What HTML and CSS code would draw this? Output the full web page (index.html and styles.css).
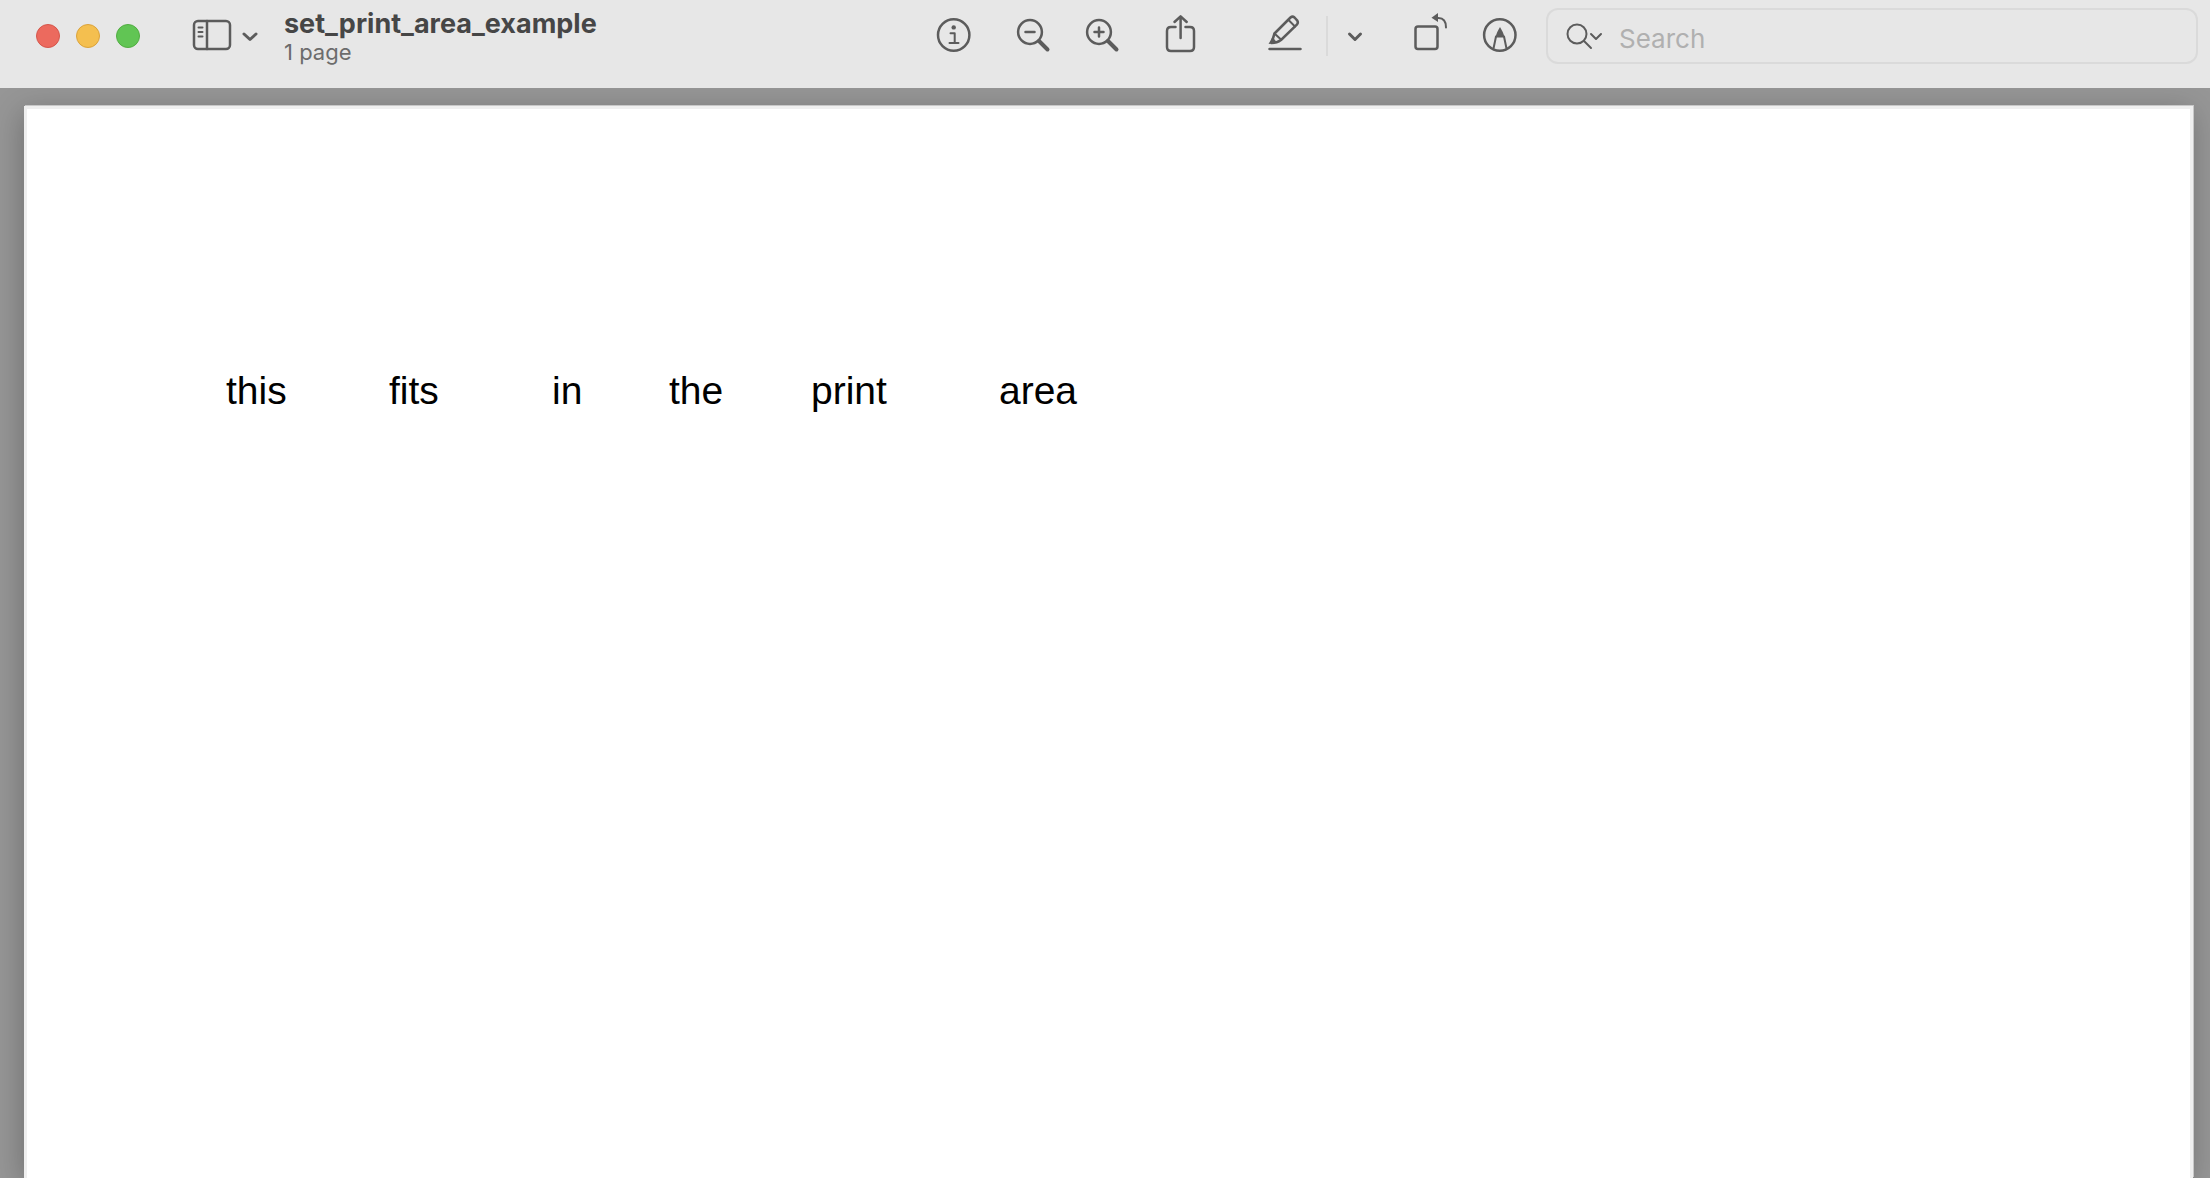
FILE: index.html
```html
<!DOCTYPE html>
<html lang="en">
<head>
<meta charset="utf-8">
<meta name="viewport" content="width=device-width, initial-scale=1">
<title>set_print_area_example</title>
<link rel="stylesheet" href="styles.css">
</head>
<body>
<header class="toolbar">
  <div class="lights">
    <button class="light light-close" aria-label="Close"></button>
    <button class="light light-minimize" aria-label="Minimize"></button>
    <button class="light light-zoom" aria-label="Full screen"></button>
  </div>
  <button class="tool sidebar-tool" aria-label="Sidebar view">
    <svg width="66" height="48" viewBox="0 0 66 48">
      <rect x="2" y="11" width="36" height="28" rx="4"/>
      <path d="M15 11v28"/>
      <path class="thin" d="M6.500 17.500h4M6.500 22h4M6.500 26.500h4"/>
      <path class="bold" d="M52 24l6 5.500 6-5.500"/>
    </svg>
  </button>
  <div class="heading">
    <h1 class="title">set_print_area_example</h1>
    <p class="subtitle">1 page</p>
  </div>
  <div class="tools">
    <button class="tool" aria-label="Info">
      <svg width="36" height="48" viewBox="0 0 36 48">
        <circle cx="17.700" cy="25" r="15.700"/>
        <circle class="solid" cx="17.700" cy="17.400" r="2.200"/>
        <path class="thin" d="M14.500 23.300h4.200v9.700M13.500 33h9"/>
      </svg>
    </button>
    <button class="tool gap-wide" aria-label="Zoom out">
      <svg width="36" height="48" viewBox="0 0 36 48">
        <circle cx="15" cy="22" r="11.900"/>
        <path d="M10.500 22h9"/>
        <path class="handle" d="M24 31l8.500 8.500"/>
      </svg>
    </button>
    <button class="tool gap" aria-label="Zoom in">
      <svg width="36" height="48" viewBox="0 0 36 48">
        <circle cx="15" cy="22" r="11.900"/>
        <path d="M10.500 22h9M15 17.500v9"/>
        <path class="handle" d="M24 31l8.500 8.500"/>
      </svg>
    </button>
    <button class="tool gap-wide" aria-label="Share">
      <svg width="36" height="48" viewBox="0 0 36 48">
        <path d="M12.500 17H8q-4 0-4 4v16q0 4 4 4h19q4 0 4-4V21q0-4-4-4h-4.500"/>
        <path d="M17.600 28V6.500M11.500 12l6.100-5.700 6.100 5.700"/>
      </svg>
    </button>
    <button class="tool gap-group" aria-label="Highlight">
      <svg width="36" height="48" viewBox="0 0 36 48">
        <path d="M2.500 39h31"/>
        <path d="M4.500 33l3-9.500 16-16q2-1.800 4 0l2.600 2.800q1.500 2 0 4L14 30q-4 3-9.500 3z"/>
        <path class="thin" d="M21.500 10l6.500 6.500M7.500 23.500l6.500 6"/>
        <path class="solid" d="M1.500 34l4-7 4.500 5.500z"/>
      </svg>
    </button>
    <span class="divider"></span>
    <button class="tool" aria-label="Highlight options">
      <svg width="16" height="48" viewBox="0 0 16 48">
        <path class="bold" d="M2.500 24l5.500 5.500 5.500-5.500"/>
      </svg>
    </button>
    <button class="tool gap-rotate" aria-label="Rotate">
      <svg width="36" height="48" viewBox="0 0 36 48">
        <rect x="2.500" y="16.500" width="22" height="22.500" rx="2.500"/>
        <path class="thin" d="M24 8h1.500q7.500 0 7.500 9.500"/>
        <path class="solid" d="M18.500 7.800l6.500-4.800v9z"/>
      </svg>
    </button>
    <button class="tool gap" aria-label="Markup">
      <svg width="36" height="48" viewBox="0 0 36 48">
        <circle cx="17.800" cy="25" r="15.700"/>
        <path class="thin" d="M11.500 38.500l2.500-12M24.500 38.500l-2.500-12"/>
        <path class="solid" d="M18 17q-3 4.500-4.800 10.500h9.600q-1.800-6-4.800-10.500z"/>
      </svg>
    </button>
  </div>
  <label class="search">
    <svg width="38" height="30" viewBox="0 0 38 30" aria-hidden="true">
      <circle cx="12" cy="13" r="9.500"/>
      <path d="M19 20l7 7"/>
      <path d="M26 13l5 5 5-5"/>
    </svg>
    <input class="search-input" type="search" placeholder="Search" aria-label="Search">
  </label>
</header>
<main class="viewer">
  <article class="sheet">
    <table class="cells">
      <colgroup><col class="c1"><col class="c2"><col class="c3"><col class="c4"><col class="c5"><col class="c6"></colgroup>
      <tbody>
        <tr><td>this</td><td>fits</td><td>in</td><td>the</td><td>print</td><td>area</td></tr>
      </tbody>
    </table>
  </article>
</main>
</body>
</html>
```
FILE: styles.css
```css
* {
  box-sizing: border-box;
}

body {
  display: flex;
  flex-direction: column;
  height: 100vh;
  margin: 0;
  overflow: hidden;
  background: #969696;
  font-family: Inter, "Liberation Sans", sans-serif;
}

button {
  flex: none;
  padding: 0;
  border: 0;
  background: none;
}

.toolbar {
  position: relative;
  z-index: 1;
  display: flex;
  flex: none;
  align-items: flex-start;
  height: 88px;
  padding: 8px 12px 0 36px;
  background: #e7e7e7;
}

.lights {
  display: flex;
  gap: 16px;
  padding-top: 16px;
}

.light {
  width: 24px;
  height: 24px;
  border: 1px solid;
  border-radius: 50%;
}

.light-close {
  border-color: #d5574c;
  background: #ec6a5e;
}

.light-minimize {
  border-color: #dba33b;
  background: #f4bf4f;
}

.light-zoom {
  border-color: #52ad42;
  background: #61c554;
}

.tool {
  display: block;
  padding-top: 2px;
}

.tool svg,
.search svg {
  display: block;
  flex: none;
  fill: none;
  stroke: #5c5c5c;
  stroke-width: 2.500;
  stroke-linecap: round;
  stroke-linejoin: round;
}

.tool .thin {
  stroke-width: 2;
}

.tool .bold {
  stroke-width: 3;
}

.tool .handle {
  stroke-width: 4;
}

.tool .solid {
  fill: #5c5c5c;
  stroke: none;
}

.sidebar-tool {
  margin-left: 52px;
}

.heading {
  flex: 1 1 0;
  min-width: 0;
  margin-left: 26px;
}

.title {
  margin: 0;
  color: #464646;
  font-size: 27px;
  font-weight: 700;
  line-height: 31px;
}

.subtitle {
  margin: 0;
  color: #6c6c6c;
  font-size: 22px;
  line-height: 26px;
}

.tools {
  display: flex;
  flex: none;
  align-items: flex-start;
  margin-right: 28px;
}

.gap {
  margin-left: 33px;
}

.gap-wide {
  margin-left: 43px;
}

.gap-group {
  margin-left: 68px;
}

.gap-rotate {
  margin-left: 50px;
}

.divider {
  width: 2px;
  height: 40px;
  margin: 8px 19px 0 23px;
  background: #dadada;
}

.search {
  display: flex;
  flex: 1 1 0;
  align-items: center;
  min-width: 0;
  height: 56px;
  border-radius: 12px;
  box-shadow: inset 0 0 0 2px #dadada;
}

.search svg {
  margin-left: 19px;
  stroke-width: 2;
}

.search-input {
  flex: 1;
  min-width: 0;
  height: 52px;
  padding: 4px 0 0 16px;
  border: 0;
  outline: 0;
  background: none;
  color: #464646;
  font: 26px Inter, "Liberation Sans", sans-serif;
}

.search-input::placeholder {
  color: #b0b0b0;
}

.viewer {
  display: flex;
  flex: 1;
  min-height: 0;
  padding: 18px 17px 0 24px;
}

.sheet {
  flex: 1;
  padding: 259px 0 0 199px;
  border: 3px solid #efefef;
  border-bottom: 0;
  background: #fff;
  box-shadow: 1px -1px 0 #c8c8c8, -2px 6px 28px rgba(0, 0, 0, 0.25);
}

.cells {
  border-collapse: collapse;
  table-layout: fixed;
  width: 863px;
  color: #000;
  font: 39px/46px "Liberation Sans", Arial, sans-serif;
}

.cells td {
  padding: 0;
}

.c1 { width: 163px; }
.c2 { width: 163px; }
.c3 { width: 117px; }
.c4 { width: 142px; }
.c5 { width: 188px; }
.c6 { width: 90px; }
```
